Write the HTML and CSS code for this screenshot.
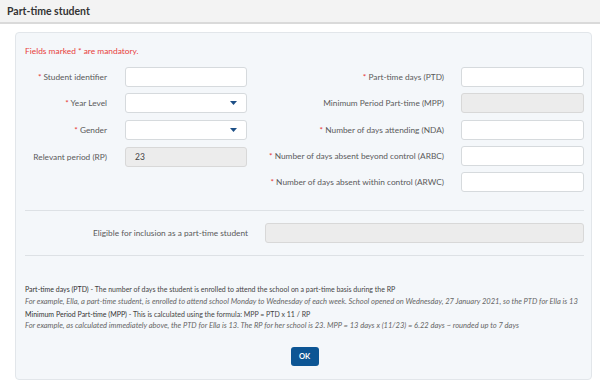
FILE: index.html
```html
<!doctype html>
<html lang="en">

<head>
  <title>Part-time student</title>
  <link rel="stylesheet" href="styles.css">
</head>

<body>
  <div class="header">Part-time student</div>

  <div class="panel">
    <p class="mandatory">Fields marked * are mandatory.</p>

    <div class="form-cols">
      <div class="col col-left">
        <div class="row">
          <label><span class="req">*</span> Student identifier</label>
          <div class="field"></div>
        </div>
        <div class="row">
          <label><span class="req">*</span> Year Level</label>
          <div class="field select">
            <svg width="7" height="4" viewBox="0 0 7 4"><path d="M0 0H7L3.5 4Z" fill="#1d4f86"/></svg>
          </div>
        </div>
        <div class="row">
          <label><span class="req">*</span> Gender</label>
          <div class="field select">
            <svg width="7" height="4" viewBox="0 0 7 4"><path d="M0 0H7L3.5 4Z" fill="#1d4f86"/></svg>
          </div>
        </div>
        <div class="row row-rp">
          <label>Relevant period (RP)</label>
          <div class="field disabled">23</div>
        </div>
      </div>

      <div class="col col-right">
        <div class="row">
          <label><span class="req">*</span> Part-time days (PTD)</label>
          <div class="field"></div>
        </div>
        <div class="row">
          <label>Minimum Period Part-time (MPP)</label>
          <div class="field disabled"></div>
        </div>
        <div class="row">
          <label><span class="req">*</span> Number of days attending (NDA)</label>
          <div class="field"></div>
        </div>
        <div class="row">
          <label><span class="req">*</span> Number of days absent beyond control (ARBC)</label>
          <div class="field"></div>
        </div>
        <div class="row">
          <label><span class="req">*</span> Number of days absent within control (ARWC)</label>
          <div class="field"></div>
        </div>
      </div>
    </div>

    <div class="eligible">
      <label>Eligible for inclusion as a part-time student</label>
      <div class="field disabled"></div>
    </div>

    <div class="help">
      <p><span class="term">Part-time days (PTD)</span> - The number of days the student is enrolled to attend the school on a part-time basis during the RP<br>
        <em>For example, Ella, a part-time student, is enrolled to attend school Monday to Wednesday of each week. School opened on Wednesday, 27 January 2021, so the PTD for Ella is 13</em></p>
      <p><span class="term">Minimum Period Part-time (MPP)</span> - This is calculated using the formula: MPP = PTD x 11 / RP<br>
        <em>For example, as calculated immediately above, the PTD for Ella is 13. The RP for her school is 23. MPP = 13 days x (11/23) = 6.22 days ~ rounded up to 7 days</em></p>
    </div>

    <div class="actions">
      <button type="button">OK</button>
    </div>
  </div>
</body>

</html>
```

FILE: styles.css
```css
body {
  margin: 0;
  font-family: Lato, "Noto Sans", sans-serif;
  background-color: #fff;
  color: #555;
}

.header {
  height: 22px;
  line-height: 22px;
  padding-left: 7px;
  font-size: 10.5px;
  font-weight: bold;
  color: #333;
  background-color: #f3f3f3;
  border-bottom: 2px solid #dadada;
}

.panel {
  margin: 8px 8px 0 15px;
  height: 346px;
  padding: 0 7px 0 9px;
  background-color: #f4f7fa;
  border: 1px solid #e2e6ea;
  border-radius: 4px;
}

.mandatory {
  margin: 13px 0 0;
  font-size: 8.4px;
  line-height: 11px;
  color: #e8403a;
}

.req {
  color: #e8403a;
}

.form-cols {
  display: flex;
  margin-top: 10px;
}

.col-left {
  width: 222px;
}

.col-right {
  flex: 1;
  margin-left: 10px;
}

.row {
  display: flex;
  align-items: center;
  height: 20px;
  margin-bottom: 6.3px;
}

.row-rp {
  margin-top: 7px;
}

.row label,
.eligible label {
  flex: 1;
  text-align: right;
  font-size: 8.3px;
  color: #5a5a5a;
}

.field {
  box-sizing: border-box;
  height: 20px;
  padding: 0 9px;
  line-height: 18px;
  font-size: 8.5px;
  color: #444;
  background-color: #fff;
  border: 1px solid #d6dadd;
  border-radius: 3px;
}

.col-left .field {
  width: 122px;
  margin-left: 18px;
}

.col-right .field {
  width: 123px;
  margin-left: 17px;
}

.field.disabled {
  background-color: #ececec;
  border-color: #d8d8d8;
}

.field.select {
  display: flex;
  align-items: center;
  justify-content: flex-end;
}

.eligible {
  display: flex;
  align-items: center;
  margin-top: 12px;
  padding: 12px 0;
  border-top: 1px solid #dde1e5;
  border-bottom: 1px solid #dde1e5;
}

.eligible .field {
  width: 319px;
  margin-left: 17px;
}

.help {
  margin-top: 28px;
  font-size: 7px;
  color: #444;
}

.help p {
  margin: 0 0 1.5px;
  line-height: 11.5px;
}

.help .term {
  color: #333;
}

.help em {
  font-size: 7.55px;
  color: #666;
}

.actions {
  text-align: center;
  margin-top: 11px;
}

button[type="button"] {
  width: 28px;
  height: 19px;
  padding: 0;
  font-family: Lato, sans-serif;
  font-size: 7.5px;
  font-weight: bold;
  color: #fff;
  background-color: #0c5594;
  border: none;
  border-radius: 3px;
}
```
